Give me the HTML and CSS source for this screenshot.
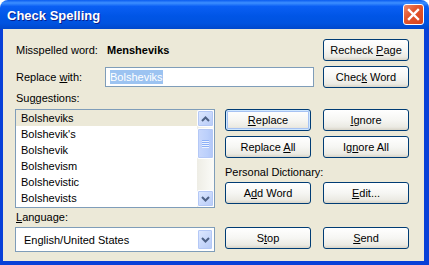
FILE: index.html
```html
<!DOCTYPE html>
<html lang="en">
<head>
  <meta charset="UTF-8" />
  <title>Check Spelling</title>
  <link rel="stylesheet" href="styles.css">
</head>
<body>

<div class="window">
  <div class="titlebar">
    <span class="title">Check Spelling</span>
    <button class="close" aria-label="Close">
      <svg width="13" height="13" viewBox="0 0 13 13"><path d="M2 2 L11 11 M11 2 L2 11" stroke="#fff" stroke-width="2.4" stroke-linecap="square"/></svg>
    </button>
  </div>
  <div class="frame">
    <div class="client">
      <div class="row">
        <span class="label">Misspelled word:</span>
        <span class="word">Mensheviks</span>
        <button class="btn push">Recheck <u>P</u>age</button>
      </div>
      <div class="row gap">
        <label class="label">Replace <u>w</u>ith:</label>
        <div class="input"><span class="sel">Bolsheviks</span></div>
        <button class="btn push">Chec<u>k</u> Word</button>
      </div>
      <div class="caption">Su<u>g</u>gestions:</div>

      <div class="main">
        <div class="list">
          <ul class="items">
            <li class="selected">Bolsheviks</li>
            <li>Bolshevik's</li>
            <li>Bolshevik</li>
            <li>Bolshevism</li>
            <li>Bolshevistic</li>
            <li>Bolshevists</li>
          </ul>
          <div class="scrollbar">
            <span class="sb-btn">
              <svg width="9" height="6" viewBox="0 0 9 6"><path d="M1 5 L4.5 1.5 L8 5" fill="none" stroke="#4d6185" stroke-width="2"/></svg>
            </span>
            <span class="track">
              <span class="thumb"><i></i><i></i><i></i><i></i></span>
            </span>
            <span class="sb-btn">
              <svg width="9" height="6" viewBox="0 0 9 6"><path d="M1 1 L4.5 4.5 L8 1" fill="none" stroke="#4d6185" stroke-width="2"/></svg>
            </span>
          </div>
        </div>

        <div class="actions">
          <div class="pair">
            <button class="btn default"><u>R</u>eplace</button>
            <button class="btn"><u>I</u>gnore</button>
          </div>
          <div class="pair gap">
            <button class="btn">Replace <u>A</u>ll</button>
            <button class="btn">Ig<u>n</u>ore All</button>
          </div>
          <div class="caption dict">Personal Dictionary:</div>
          <div class="pair near">
            <button class="btn">A<u>d</u>d Word</button>
            <button class="btn"><u>E</u>dit...</button>
          </div>
        </div>
      </div>

      <div class="caption lang"><u>L</u>anguage:</div>
      <div class="main near">
        <div class="combo">
          <span class="combo-text">English/United States</span>
          <span class="sb-btn drop">
            <svg width="9" height="6" viewBox="0 0 9 6"><path d="M1 1 L4.5 4.5 L8 1" fill="none" stroke="#4d6185" stroke-width="2"/></svg>
          </span>
        </div>
        <div class="pair">
          <button class="btn">S<u>t</u>op</button>
          <button class="btn"><u>S</u>end</button>
        </div>
      </div>
    </div>
  </div>
</div>

</body>
</html>
```

FILE: styles.css
```css
body {
  margin: 0;
  background: #fff;
  font-family: "Liberation Sans", Arial, sans-serif;
  font-size: 11px;
  color: #000;
}

.window {
  width: 429px;
  height: 265px;
  display: flex;
  flex-direction: column;
}

.titlebar {
  height: 29px;
  border-radius: 8px 8px 0 0;
  background: linear-gradient(#0a5cf0 0%, #3d8fff 10%, #0a5ff4 22%, #0055e6 55%, #0053e0 80%, #0048cc 100%);
  display: flex;
  align-items: center;
  padding: 0 5px 0 7px;
}

.title {
  color: #fff;
  font-weight: bold;
  font-size: 13px;
  text-shadow: 1px 1px #0a1e8a;
  padding-top: 1px;
}

.close {
  margin-left: auto;
  width: 21px;
  height: 21px;
  padding: 0;
  border: 1px solid #fff;
  border-radius: 3px;
  background: linear-gradient(135deg, #f08a6c 0%, #e2572f 40%, #d8421c 100%);
  display: flex;
  align-items: center;
  justify-content: center;
}

.frame {
  flex: 1;
  background: #0840d8;
  padding: 0 5px 4px 3px;
  display: flex;
}

.client {
  flex: 1;
  background: #ece9d8;
  padding: 10px 15px 0 12px;
}

.row {
  display: flex;
  align-items: center;
  height: 22px;
}

.row.gap {
  margin-top: 5px;
}

.label {
  width: 89px;
  padding-left: 1px;
}

.word {
  font-weight: bold;
  margin-left: 2px;
}

.input {
  width: 203px;
  height: 18px;
  border: 1px solid #7f9db9;
  background: #fff;
  display: flex;
  align-items: center;
  padding-left: 4px;
  box-sizing: content-box;
}

.sel {
  background: #9cc3f1;
  color: #fff;
  line-height: 14px;
}

.push {
  margin-left: auto;
}

.btn {
  width: 86px;
  height: 22px;
  padding: 0;
  border: 1px solid #003c74;
  border-radius: 3px;
  background: linear-gradient(#ffffff 0%, #f6f6f3 50%, #ebeae3 85%, #d8d4c8 100%);
  font-family: inherit;
  font-size: 11px;
  color: #000;
}

.btn.default {
  box-shadow: inset 0 0 0 1px #cee7ff, inset 0 0 0 2px #a6c2f2;
}

.caption {
  height: 13px;
  line-height: 13px;
  margin-top: 4px;
  padding-left: 1px;
}

.main {
  display: flex;
  margin-top: 4px;
}

.main.near {
  margin-top: 3px;
}

.list {
  width: 198px;
  height: 97px;
  border: 1px solid #7f9db9;
  background: #fff;
  display: flex;
}

.items {
  flex: 1;
  list-style: none;
  margin: 0;
  padding: 0;
}

.items li {
  height: 16px;
  line-height: 16px;
  padding-left: 5px;
}

.items li.selected {
  background: #ece9d8;
}

.scrollbar {
  width: 17px;
  display: flex;
  flex-direction: column;
  background: linear-gradient(to right, #eeede5, #fbfbf8);
}

.sb-btn {
  height: 17px;
  box-sizing: border-box;
  border: 1px solid #fff;
  border-radius: 2px;
  background: linear-gradient(135deg, #dfe9ff 0%, #c8d8fb 55%, #b6caf6 100%);
  box-shadow: inset 0 0 0 1px #b4c8f6;
  display: flex;
  align-items: center;
  justify-content: center;
}

.track {
  flex: 1;
  padding-top: 1px;
}

.thumb {
  height: 31px;
  box-sizing: border-box;
  border: 1px solid #fff;
  border-radius: 2px;
  background: linear-gradient(to right, #c9d8fc, #bcd0fb 60%, #b1c6f7);
  box-shadow: inset 0 0 0 1px #b4c8f6;
  display: flex;
  flex-direction: column;
  align-items: center;
  justify-content: center;
  gap: 1px;
}

.thumb i {
  width: 7px;
  height: 1px;
  background: #8cb0f8;
  box-shadow: 0 1px #eef4fe;
}

.actions {
  margin-left: 10px;
}

.pair {
  display: flex;
  gap: 12px;
}

.pair.gap {
  margin-top: 5px;
}

.pair.near {
  margin-top: 3px;
}

.caption.dict {
  margin-top: 8px;
  padding-left: 0;
}

.caption.lang {
  margin-top: 3px;
}

.combo {
  width: 196px;
  height: 21px;
  border: 1px solid #7f9db9;
  background: #fff;
  display: flex;
  align-items: center;
  padding: 1px;
  box-sizing: content-box;
  margin-right: 10px;
}

.combo-text {
  flex: 1;
  padding-left: 7px;
}

.drop {
  width: 16px;
  height: 21px;
}
```
